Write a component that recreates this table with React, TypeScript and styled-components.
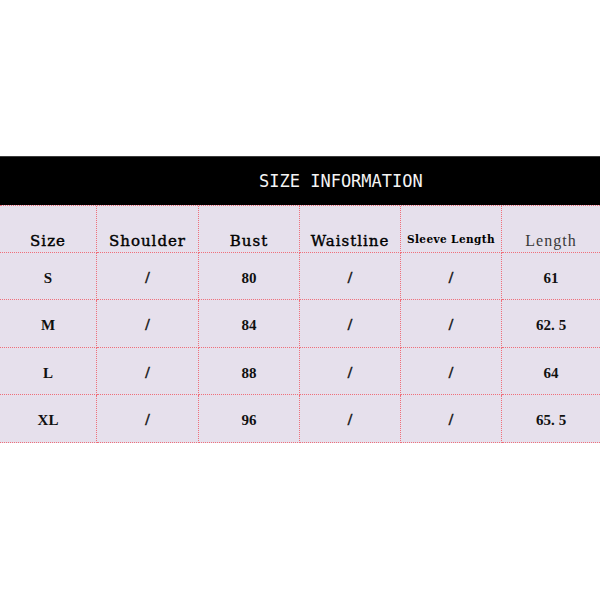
import styled, {createGlobalStyle} from "styled-components";

const GlobalStyle = createGlobalStyle`
    html, body {
        margin: 0;
        padding: 0;
        background: #ffffff;
    }
`;

interface sizeRow {
    size: string
    shoulder: string
    bust: string
    waist: string
    sleeve: string
    length: string
}

const ROWS: sizeRow[] = [
    {size: "S", shoulder: "/", bust: "80", waist: "/", sleeve: "/", length: "61"},
    {size: "M", shoulder: "/", bust: "84", waist: "/", sleeve: "/", length: "62.5"},
    {size: "L", shoulder: "/", bust: "88", waist: "/", sleeve: "/", length: "64"},
    {size: "XL", shoulder: "/", bust: "96", waist: "/", sleeve: "/", length: "65.5"},
];

const DOTS = "1px dotted #ef6f7a";

const Page = styled.div`
    width: 600px;
    height: 600px;
    padding-top: 156px;
    box-sizing: border-box;
    display: flex;
    flex-direction: column;
    background: #ffffff;
`;

const Banner = styled.div`
    height: 49px;
    box-sizing: border-box;
    border-top: 1px solid #3c3c3c;
    background: #000000;
    color: #f4f4f4;
    display: flex;
    align-items: center;
    padding-left: 259px;
    font-family: "DejaVu Sans Mono", monospace;
    font-size: 17px;
`;

const Table = styled.div`
    display: grid;
    grid-template-columns: 97px 102px 101px 101px 101px 98px;
    grid-template-rows: 47px 47px 48px 47px 48px;
    background: #e6e0ec;
    border-top: ${DOTS};
`;

const Cell = styled.div<{ $head?: boolean; $last?: boolean }>`
    display: flex;
    justify-content: center;
    align-items: ${p => p.$head ? "flex-end" : "center"};
    padding-bottom: ${p => p.$head ? "3px" : "0"};
    padding-top: ${p => p.$head ? "0" : "3px"};
    box-sizing: border-box;
    border-right: ${p => p.$last ? "none" : DOTS};
    border-bottom: ${DOTS};
    color: #111111;
    font-family: "Liberation Serif", serif;
    font-weight: bold;
    font-size: 15px;
    line-height: 16px;
`;

const HeadLabel = styled.span<{ $small?: boolean; $light?: boolean }>`
    font-family: ${p => p.$light ? `"Liberation Serif"` : `"DejaVu Serif"`}, serif;
    font-weight: ${p => p.$small ? "bold" : "normal"};
    font-size: ${p => p.$small ? "10.5px" : p.$light ? "16px" : "15px"};
    letter-spacing: ${p => p.$small ? "0.4px" : "1px"};
    color: ${p => p.$light ? "#3a3a3a" : "#000000"};
    -webkit-text-stroke: ${p => p.$light || p.$small ? "0" : "0.4px #000"};
    padding-bottom: ${p => p.$small ? "2px" : "0"};
    white-space: nowrap;
`;

const Slash = styled.span`
    font-size: 16px;
    color: #111111;
    -webkit-text-stroke: 0.4px #111;
`;

const Dot = styled.span`
    margin-right: 4px;
`;

function Value({text}: { text: string }) {
    if (text === "/") return <Slash>/</Slash>;
    const idx = text.indexOf(".");
    if (idx < 0) return <>{text}</>;
    return <>{text.slice(0, idx)}<Dot>.</Dot>{text.slice(idx + 1)}</>;
}

export default function App() {
    return (
        <Page>
            <GlobalStyle/>
            <Banner>SIZE INFORMATION</Banner>
            <Table>
                <Cell $head><HeadLabel>Size</HeadLabel></Cell>
                <Cell $head><HeadLabel>Shoulder</HeadLabel></Cell>
                <Cell $head><HeadLabel>Bust</HeadLabel></Cell>
                <Cell $head><HeadLabel>Waistline</HeadLabel></Cell>
                <Cell $head><HeadLabel $small>Sleeve Length</HeadLabel></Cell>
                <Cell $head $last><HeadLabel $light>Length</HeadLabel></Cell>

                {ROWS.map(row => (
                    [row.size, row.shoulder, row.bust, row.waist, row.sleeve, row.length].map((v, i) => (
                        <Cell key={row.size + i} $last={i === 5}>
                            <Value text={v}/>
                        </Cell>
                    ))
                ))}
            </Table>
        </Page>
    );
}
